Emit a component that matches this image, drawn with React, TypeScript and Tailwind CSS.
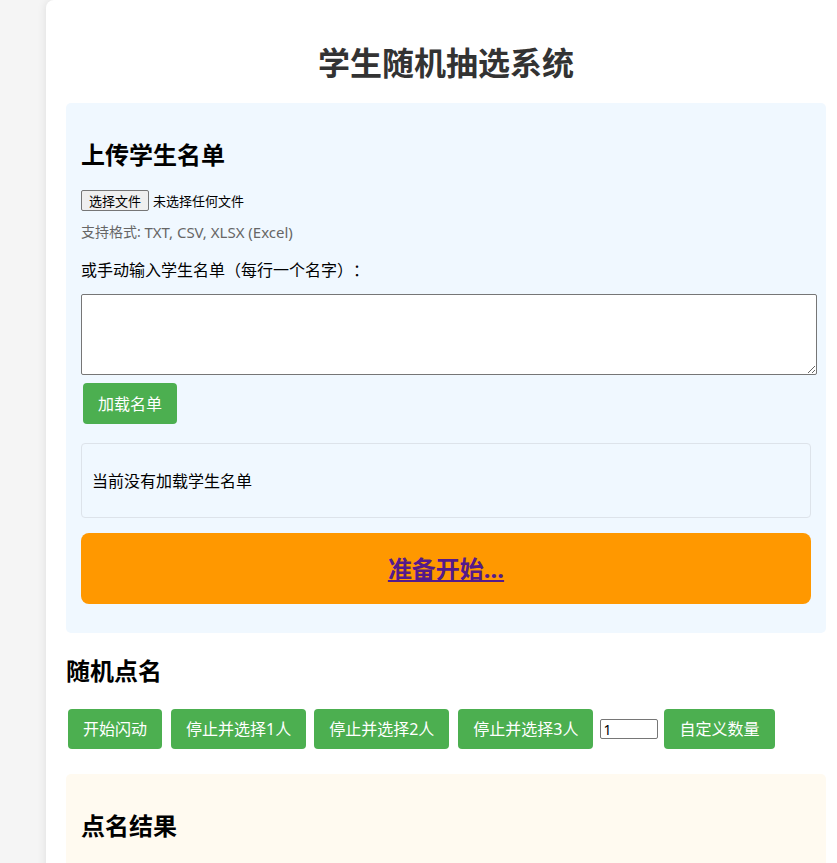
import React from "react";

const font = { fontFamily: '"Noto Sans", "Noto Sans CJK SC", sans-serif' };
const cjk = { fontFamily: '"Noto Sans CJK SC", "Noto Sans", sans-serif' };

function GreenButton({ children, className = "" }: { children: React.ReactNode; className?: string }) {
  return (
    <button
      className={`h-[40px] shrink-0 whitespace-nowrap rounded-[4px] bg-[#4caf50] px-[15px] text-[16px] leading-[20px] text-white ${className}`}
    >
      {children}
    </button>
  );
}

export default function App() {
  return (
    <div className="min-h-[863px] w-full overflow-hidden bg-[#f5f5f5]" style={font}>
      <div className="ml-[46px] w-[800px] rounded-lg bg-white px-[20px] pt-[43px] pb-[40px] shadow-[0_0_10px_rgba(0,0,0,0.1)]">
        <h1 className="text-center text-[32px] font-bold leading-[40px] text-[#333]">学生随机抽选系统</h1>

        <section className="mt-[20px] rounded-[5px] bg-[#f0f8ff] px-[15px] pt-[15px] pb-[29px]">
          <h2 className="mt-[22px] text-[24px] font-bold leading-[30px] text-black">上传学生名单</h2>

          <div className="mt-[20px] flex h-[21px] items-center text-[13px] text-black">
            <span className="flex h-[21px] items-center rounded-[2px] border border-[#767676] bg-[#efefef] px-[7px] leading-[16px]">
              选择文件
            </span>
            <span className="ml-[4px] leading-[16px]">未选择任何文件</span>
          </div>

          <p className="mt-[11px] flex h-[20px] items-center text-[14px] leading-[20px] text-[#666]">
            <span>支持格式:&nbsp;</span>
            <span className="text-[15px] leading-[20px]">TXT, CSV, XLSX (Excel)</span>
          </p>

          <p className="mt-[16px] text-[16px] leading-[22px] text-black [text-spacing-trim:space-all]" style={cjk}>
            或手动输入学生名单（每行一个名字）：
          </p>

          <textarea className="mt-[14px] block h-[81px] w-[736px] rounded-[2px] border border-[#767676] bg-white p-[2px]" />

          <GreenButton className="mt-[8px] ml-[2px] block h-[41px]">加载名单</GreenButton>

          <div className="mt-[19px] flex h-[75px] w-[730px] items-center rounded-[4px] border border-[#dde3ea] px-[10px] text-[16px] leading-[22px] text-black">
            当前没有加载学生名单
          </div>

          <div className="mt-[15px] flex h-[71px] w-[730px] items-center justify-center rounded-[8px] bg-[#ff9800]">
            <a className="text-[24px] font-bold leading-[30px] text-[#551a8b] underline" href="#">
              准备开始...
            </a>
          </div>
        </section>

        <h2 className="mt-[23px] text-[24px] font-bold leading-[30px] text-black">随机点名</h2>

        <div className="mt-[23px] flex items-center">
          <GreenButton className="ml-[2px]">开始闪动</GreenButton>
          <GreenButton className="ml-[9px]">停止并选择1人</GreenButton>
          <GreenButton className="ml-[8px]">停止并选择2人</GreenButton>
          <GreenButton className="ml-[9px]">停止并选择3人</GreenButton>
          <input
            type="text"
            defaultValue="1"
            className="ml-[7px] h-[20px] w-[58px] rounded-[2px] border border-[#767676] bg-white px-[2px] text-[14px] leading-[16px] text-black"
          />
          <GreenButton className="ml-[6px]">自定义数量</GreenButton>
        </div>

        <section className="mt-[25px] rounded-[5px] bg-[#fffaf0] px-[15px] pt-[15px] pb-[60px]">
          <h2 className="mt-[22px] text-[24px] font-bold leading-[30px] text-black">点名结果</h2>
        </section>
      </div>
    </div>
  );
}
